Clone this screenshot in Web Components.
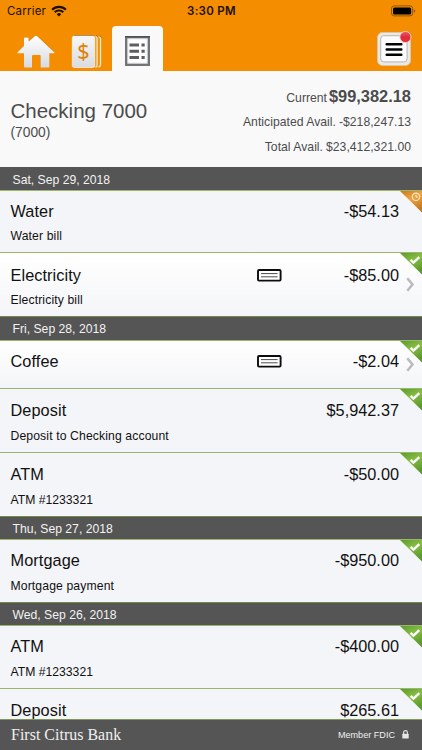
<!DOCTYPE html>
<html lang="en">
<head>
<meta charset="utf-8">
<title>Checking 7000</title>
<style>
    html, body {
        margin: 0;
        height: 100%;
        overflow: hidden;
    }
    body {
        font-family: "Liberation Sans", Arial, sans-serif;
        color: #111;
        background: #f4f5f8;
    }
</style>
</head>
<body>
<bank-screen>
    <status-bar slot="top" carrier="Carrier" time="3:30 PM"></status-bar>
    <nav-tabs slot="top"></nav-tabs>
    <account-summary slot="top" name="Checking 7000" number="(7000)">
        <balance-line label="Current" main>$99,382.18</balance-line>
        <balance-line label="Anticipated Avail.">-$218,247.13</balance-line>
        <balance-line label="Total Avail.">$23,412,321.00</balance-line>
    </account-summary>

    <date-bar first>Sat, Sep 29, 2018</date-bar>
    <transaction-row name="Water" amount="-$54.13" status="pending" style="--h: 62px; --gap: 7px">Water bill</transaction-row>
    <transaction-row name="Electricity" amount="-$85.00" details style="--h: 64px; --top: 12px; --gap: 7px">Electricity bill</transaction-row>
    <date-bar style="--h: 24px">Fri, Sep 28, 2018</date-bar>
    <transaction-row name="Coffee" amount="-$2.04" details style="--h: 48px"></transaction-row>
    <transaction-row name="Deposit" amount="$5,942.37" style="--h: 64px; --top: 11px">Deposit to Checking account</transaction-row>
    <transaction-row name="ATM" amount="-$50.00" style="--h: 64px; --top: 11px; --memo-spacing: 0">ATM #1233321</transaction-row>
    <date-bar>Thu, Sep 27, 2018</date-bar>
    <transaction-row name="Mortgage" amount="-$950.00">Mortgage payment</transaction-row>
    <date-bar>Wed, Sep 26, 2018</date-bar>
    <transaction-row name="ATM" amount="-$400.00" style="--memo-spacing: 0">ATM #1233321</transaction-row>
    <transaction-row name="Deposit" amount="$265.61" style="--h: 31px; --top: 11px"></transaction-row>

    <bank-footer slot="bottom" note="Member FDIC">First Citrus Bank</bank-footer>
</bank-screen>

<script>
class BankScreen extends HTMLElement {
    constructor() {
        super();
        this.attachShadow({ mode: "open" });
        this.shadowRoot.innerHTML = `
            <style>
                :host {
                    display: flex;
                    flex-direction: column;
                    height: 100vh;
                }
                main {
                    flex: 1;
                    min-height: 0;
                    overflow: hidden;
                }
            </style>
            <slot name="top"></slot>
            <main><slot></slot></main>
            <slot name="bottom"></slot>
        `;
    }
}

class StatusBar extends HTMLElement {
    constructor() {
        super();
        this.attachShadow({ mode: "open" });
    }

    connectedCallback() {
        this.shadowRoot.innerHTML = `
            <style>
                :host {
                    display: grid;
                    grid-template-columns: 1fr auto 1fr;
                    align-items: center;
                    box-sizing: border-box;
                    height: 22px;
                    padding: 0 6px 0 7px;
                    background: #f48e00;
                    color: #1c1000;
                    font: 500 11.5px/22px Inter, sans-serif;
                }
                .left {
                    display: flex;
                    align-items: center;
                    gap: 5px;
                    font-weight: 400;
                    letter-spacing: 0.2px;
                }
                .time {
                    font-weight: 600;
                    letter-spacing: 0.3px;
                }
                .battery {
                    justify-self: end;
                }
                svg { display: block; }
            </style>
            <div class="left">
                <span>${this.getAttribute('carrier')}</span>
                <svg width="16" height="12" viewBox="0 0 16 12">
                    <g fill="none" stroke="#1c1000" stroke-width="2.1">
                        <path d="M1.1 4.7a9.8 9.8 0 0 1 13.8 0"/>
                        <path d="M3.7 7.3a6.1 6.1 0 0 1 8.6 0"/>
                    </g>
                    <path d="M8 11.6 5.7 9.2a3.3 3.3 0 0 1 4.6 0z" fill="#1c1000"/>
                </svg>
            </div>
            <span class="time">${this.getAttribute('time')}</span>
            <svg class="battery" width="25" height="12" viewBox="0 0 25 12">
                <rect x="0.5" y="0.9" width="21.2" height="10" rx="2.7" fill="none" stroke="#8c5408"/>
                <rect x="2" y="2.4" width="18.2" height="7" rx="1.5" fill="#000"/>
                <path d="M23 4.2v3.6c1.7-.6 1.7-3 0-3.6z" fill="#8c5408"/>
            </svg>
        `;
    }
}

class NavTabs extends HTMLElement {
    constructor() {
        super();
        this.attachShadow({ mode: "open" });
        this.shadowRoot.innerHTML = `
            <style>
                :host {
                    display: flex;
                    align-items: flex-end;
                    box-sizing: border-box;
                    height: 49px;
                    padding: 0 10px 0 16px;
                    background: #f48e00;
                }
                svg {
                    display: block;
                    overflow: visible;
                }
                .home { margin: 0 16px 2px 0; }
                .cards { margin: 0 10px 2px 0; }
                .tab {
                    display: grid;
                    place-items: center;
                    box-sizing: border-box;
                    width: 51px;
                    height: 45px;
                    padding: 5px 1px 0 0;
                    border-radius: 4px 4px 0 0;
                    background: #f9f9fa;
                }
                .menu { margin: 0 0 4px auto; }
            </style>
            <svg class="home" width="40" height="34" viewBox="0 0 40 34">
                <defs>
                    <linearGradient id="g" x1="0" y1="0" x2="0" y2="1">
                        <stop offset="0" stop-color="#fff"/>
                        <stop offset="1" stop-color="#d8dadf"/>
                    </linearGradient>
                    <path id="house" d="M19 .9q1-.8 2 0L38.3 17.2q.8 1-.5 1H33.4V31.5q0 1-1 1H24.6V21q0-1-1-1H17q-1 0-1 1V32.5H9q-1 0-1-1V18.2H2q-1.3 0-.5-1L8 10.8V3.2q0-.6.6-.6H12q.6 0 .6.6V6.4z"/>
                </defs>
                <use href="#house" fill="#a96203" opacity=".55" transform="translate(0 -.5)"/>
                <use href="#house" fill="url(#g)"/>
            </svg>
            <svg class="cards" width="30" height="34" viewBox="0 0 30 34">
                <defs>
                    <linearGradient id="c" x1="0" y1="0" x2="0" y2="1">
                        <stop offset="0" stop-color="#f7f7f8"/>
                        <stop offset="1" stop-color="#d9dbe0"/>
                    </linearGradient>
                </defs>
                <path d="M2 .6H20.5q2 0 2 2M24 .8q1.5 0 1.8 1.5M27 1q1.5 0 2 1.5" fill="none" stroke="#935a10" stroke-width="1"/>
                <rect x=".3" y="1" width="22.5" height="31.5" rx="2" fill="url(#c)" stroke="#fff" stroke-width=".6"/>
                <path d="M23.5 1.3q1.6.5 1.6 2V30.3q0 1.5-1.6 2" fill="none" stroke="#f3eadb" stroke-width="1.3"/>
                <path d="M26.6 1.6q1.9.5 1.9 2V30q0 1.5-1.9 2" fill="none" stroke="#f3eadb" stroke-width="1.3"/>
                <text x="11.5" y="23.8" text-anchor="middle" font-family="Noto Sans, sans-serif" font-size="21.5" fill="#dd8206">$</text>
            </svg>
            <div class="tab">
                <svg width="25" height="30" viewBox="0 0 25 30">
                    <rect x="1.2" y="1.2" width="22.6" height="27.6" fill="#fff" stroke="#737477" stroke-width="2.4"/>
                    <path d="M0 .8H25" stroke="#4a4b4e" stroke-width="1.3"/>
                    <rect x="2.9" y="2.9" width="19.2" height="24.2" fill="none" stroke="#c9cacc" stroke-width=".6"/>
                    <path d="M4.5 9H14M4.5 15.2H14M4.5 21.5H14M16.5 9h3.2M16.5 15.2h3.2M16.5 21.5h3.2" stroke="#5d5e61" stroke-width="2.9"/>
                </svg>
            </div>
            <svg class="menu" width="36" height="36" viewBox="0 0 36 36">
                <defs>
                    <linearGradient id="r" x1="0" y1="0" x2="0" y2="1">
                        <stop offset="0" stop-color="#e96070"/>
                        <stop offset=".5" stop-color="#e02b3c"/>
                        <stop offset="1" stop-color="#e72d3e"/>
                    </linearGradient>
                </defs>
                <rect x="1.5" y="1.5" width="33" height="33" rx="5" fill="#ece9e4" stroke="#d9c9b0" stroke-width=".8"/>
                <rect x="4.7" y="4.7" width="26.4" height="26.2" rx="3" fill="#fbfbfc" stroke="#b5b6b9" stroke-width="1"/>
                <path d="M10.7 13.2H25.3M10.7 18.4H25.3M10.7 23.7H25.3" stroke="#000" stroke-width="2.5" stroke-linecap="round"/>
                <circle cx="29.4" cy="6" r="5.6" fill="url(#r)" stroke="#f8d9cc" stroke-width=".9"/>
            </svg>
        `;
    }
}

class AccountSummary extends HTMLElement {
    constructor() {
        super();
        this.attachShadow({ mode: "open" });
    }

    connectedCallback() {
        this.shadowRoot.innerHTML = `
            <style>
                :host {
                    display: flex;
                    justify-content: space-between;
                    box-sizing: border-box;
                    height: 96px;
                    padding: 13px 11px 0 10.5px;
                    background: #f9f9fa;
                    color: #4c4c4c;
                }
                h1 {
                    margin: 15px 0 0;
                    font-size: 20.5px;
                    font-weight: 400;
                    line-height: 24px;
                }
                p {
                    margin: 1px 0 0;
                    font-size: 13.8px;
                    line-height: 18px;
                }
                .balances {
                    display: flex;
                    flex-direction: column;
                    align-items: flex-end;
                }
            </style>
            <div>
                <h1>${this.getAttribute('name')}</h1>
                <p>${this.getAttribute('number')}</p>
            </div>
            <div class="balances"><slot></slot></div>
        `;
    }
}

class BalanceLine extends HTMLElement {
    constructor() {
        super();
        this.attachShadow({ mode: "open" });
    }

    connectedCallback() {
        this.shadowRoot.innerHTML = `
            <style>
                :host {
                    display: flex;
                    align-items: baseline;
                    gap: 3px;
                    height: 25px;
                    font-size: 12.2px;
                    line-height: 25px;
                    letter-spacing: 0.02px;
                    white-space: nowrap;
                }
                b { font-weight: 400; }
                :host([main]) {
                    gap: 2px;
                    height: 26px;
                    line-height: 24px;
                    letter-spacing: 0;
                }
                :host([main]) b {
                    font-size: 16.4px;
                    font-weight: 700;
                }
            </style>
            <span>${this.getAttribute('label')}</span>
            <b><slot></slot></b>
        `;
    }
}

class DateBar extends HTMLElement {
    constructor() {
        super();
        this.attachShadow({ mode: "open" });
        this.shadowRoot.innerHTML = `
            <style>
                :host {
                    display: block;
                    box-sizing: border-box;
                    height: var(--h, 23px);
                    padding-left: 12.5px;
                    border-top: 1px solid #6f8a4c;
                    background: #555;
                    color: #f2f2f2;
                    font-size: 12.2px;
                    line-height: 24px;
                }
                :host([first]) { border-top-color: #555; }
            </style>
            <slot></slot>
        `;
    }
}

class TransactionRow extends HTMLElement {
    constructor() {
        super();
        this.attachShadow({ mode: "open" });
    }

    connectedCallback() {
        const pending = this.getAttribute('status') === 'pending';
        const details = this.hasAttribute('details');
        const colors = pending ? ['#c47a1c', '#efa444'] : ['#5c9a2b', '#86bd45'];

        const mark = pending
            ? '<circle cx="16" cy="5.8" r="3.7" fill="none" stroke="#fbe8cb" stroke-width="1.2"/><path d="M16 3.6V6.1H18" fill="none" stroke="#fbe8cb" stroke-width="1"/>'
            : '<path d="M10.6 6.9 13.5 9.7 19.3 4.2" fill="none" stroke="#fff" stroke-width="2.3"/>';

        const check = `
            <svg class="check" width="25" height="13" viewBox="0 0 25 13">
                <rect x="1" y="1" width="22.6" height="10.6" rx="1" fill="#fff" stroke="#0c0c0c" stroke-width="1.9"/>
                <path d="M4 4.6H20.6M4 7.8H20.6" stroke="#4c4c4c" stroke-width="1"/>
            </svg>`;

        const chevron = `
            <svg class="chevron" width="9" height="15" viewBox="0 0 9 15">
                <path d="M1.3 1.3 6.5 7.5 1.3 13.7" fill="none" stroke="#b9babd" stroke-width="2.5"/>
            </svg>`;

        this.shadowRoot.innerHTML = `
            <style>
                :host {
                    display: block;
                    position: relative;
                    box-sizing: border-box;
                    height: var(--h, 63px);
                    padding: var(--top, 10px) 23px 0 10.5px;
                    border-top: 1px solid #9bb56a;
                    background: #f4f5f8;
                    overflow: hidden;
                }
                :host([details]) { background: linear-gradient(#fff, #f4f5f8); }
                .line {
                    display: flex;
                    align-items: center;
                    height: 20px;
                    font-size: 16.3px;
                    line-height: 20px;
                }
                .name {
                    flex: 1;
                    letter-spacing: 0.08px;
                }
                .amount {
                    width: 117px;
                    text-align: right;
                }
                .memo {
                    margin-top: var(--gap, 8px);
                    font-size: 12.2px;
                    line-height: 16px;
                    letter-spacing: var(--memo-spacing, 0.12px);
                }
                svg { display: block; }
                .corner {
                    position: absolute;
                    top: 0;
                    right: 0;
                }
                .chevron {
                    position: absolute;
                    top: calc(50% - 8px);
                    right: 7px;
                }
            </style>
            <div class="line">
                <span class="name">${this.getAttribute('name')}</span>
                ${details ? check : ''}
                <span class="amount">${this.getAttribute('amount')}</span>
            </div>
            <div class="memo"><slot></slot></div>
            <svg class="corner" width="22" height="22" viewBox="0 0 22 22">
                <defs>
                    <linearGradient id="f" x1="0" y1="0" x2=".5" y2="1">
                        <stop offset="0" stop-color="${colors[0]}"/>
                        <stop offset=".5" stop-color="${colors[1]}"/>
                        <stop offset="1" stop-color="${colors[0]}"/>
                    </linearGradient>
                </defs>
                <path d="M0 0H22V21.5z" fill="url(#f)"/>
                ${mark}
            </svg>
            ${details ? chevron : ''}
        `;
    }
}

class BankFooter extends HTMLElement {
    constructor() {
        super();
        this.attachShadow({ mode: "open" });
    }

    connectedCallback() {
        this.shadowRoot.innerHTML = `
            <style>
                :host {
                    display: flex;
                    align-items: center;
                    box-sizing: border-box;
                    height: 31px;
                    padding: 0 13px 0 11px;
                    border-top: 1px solid #7f985a;
                    background: #555;
                    color: #f0f0f0;
                }
                .brand {
                    flex: 1;
                    font: 15.9px/30px "Liberation Serif", serif;
                    letter-spacing: 0.04px;
                }
                .note {
                    margin: -1px 7px 0 0;
                    font-size: 9.1px;
                }
                svg { margin-top: -1px; }
            </style>
            <span class="brand"><slot></slot></span>
            <span class="note">${this.getAttribute('note')}</span>
            <svg width="7" height="9" viewBox="0 0 7 9">
                <path d="M1.6 4V2.5a1.9 1.9 0 0 1 3.8 0V4" fill="none" stroke="#e6e6e6" stroke-width="1.1"/>
                <rect x=".3" y="3.7" width="6.4" height="4.8" rx=".5" fill="#e6e6e6"/>
            </svg>
        `;
    }
}

customElements.define('bank-screen', BankScreen);
customElements.define('status-bar', StatusBar);
customElements.define('nav-tabs', NavTabs);
customElements.define('account-summary', AccountSummary);
customElements.define('balance-line', BalanceLine);
customElements.define('date-bar', DateBar);
customElements.define('transaction-row', TransactionRow);
customElements.define('bank-footer', BankFooter);
</script>
</body>
</html>
